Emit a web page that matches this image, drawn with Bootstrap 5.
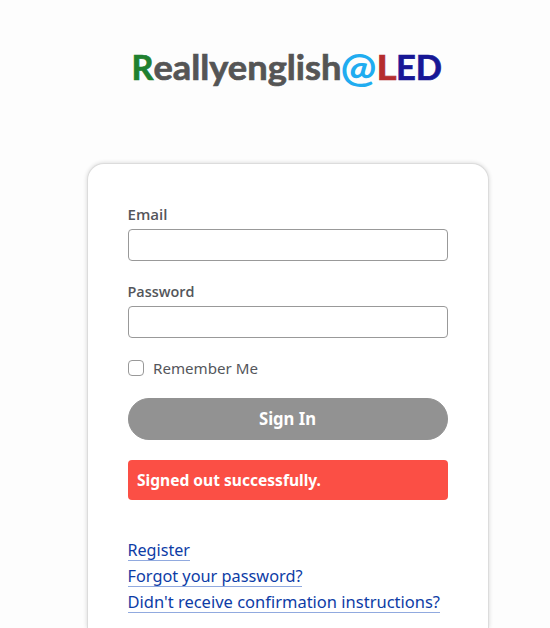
<!DOCTYPE html>
<html lang="en">
<head>
<meta charset="utf-8">
<meta name="viewport" content="width=device-width, initial-scale=1">
<title>Reallyenglish@LED</title>
<link href="https://cdn.jsdelivr.net/npm/bootstrap@5.3.0/dist/css/bootstrap.min.css" rel="stylesheet">
<style>
html, body { height: 628px; overflow: hidden; }
body { background: #fdfdfd; font-family: "Noto Sans", sans-serif; color: #54565b; font-size: 15px; }
.brand-logo { height: 163px; }
.brand-logo svg { display: block; font-family: Lato, sans-serif; font-weight: 700; font-size: 35px; }
.brand-logo .heavy { stroke-width: .7px; }
.login-box { width: 402px; height: 465px; margin-left: 87px; padding: 41px 40px 0; border: 1px solid #dcdcdc; border-bottom: 0; border-radius: 17px 17px 0 0; box-shadow: 0 0 4px rgba(0,0,0,.16); }
.field-label { height: 24px; line-height: 21px; font-family: "Open Sans", sans-serif; font-weight: 600; }
.field-label.second { margin-top: 21px; }
.login-box .form-control { height: 32px; border: 1px solid #999; border-radius: 4px; }
.remember { margin-top: 22px; height: 16px; }
.remember .form-check-input { width: 16px; height: 16px; border: 1px solid #999; border-radius: 4px; }
.remember label { margin-left: 9px; line-height: 16px; }
.btn-sign { --bs-btn-bg: #929292; --bs-btn-border-color: #929292; --bs-btn-hover-bg: #828282; height: 42px; margin-top: 22px; padding: 0; font-size: 17px; font-weight: 700; }
.notice { height: 40px; margin: 20px 0 0; padding: 0 9px; border: 0; border-radius: 4px; background: #fb4f45; color: #fff; font-size: 16px; font-weight: 700; }
.links { margin-top: 41px; }
.links a { height: 20px; margin-bottom: 6px; line-height: 19px; font-size: 16px; color: #0d3ca6; border-bottom: 1px solid #91aadf; white-space: nowrap; }
.fit { display: block; overflow: visible; fill: currentColor; }
</style>
</head>
<body>
<header class="brand-logo">
  <svg width="550" height="163" role="img" aria-label="Reallyenglish@LED">
    <text class="heavy" x="131.5" y="80" fill="#20802f" stroke="#20802f" textLength="22" lengthAdjust="spacingAndGlyphs">R</text>
    <text class="heavy" x="153.5" y="80" fill="#555" stroke="#555" textLength="188" lengthAdjust="spacingAndGlyphs">eallyenglish</text>
    <text x="340.5" y="82" font-size="40" style="font-size:41px" fill="#20acf0" textLength="36" lengthAdjust="spacingAndGlyphs">@</text>
    <text class="heavy" x="376.5" y="80" fill="#b52c2e" stroke="#b52c2e" textLength="20" lengthAdjust="spacingAndGlyphs">L</text>
    <text class="heavy" x="396" y="80" fill="#171795" stroke="#171795" textLength="46" lengthAdjust="spacingAndGlyphs">ED</text>
  </svg>
</header>
<main class="card login-box">
  <form>
    <label class="field-label d-block" for="email"><svg class="fit" width="40" height="21"><text x="-.5" y="15" textLength="40" lengthAdjust="spacingAndGlyphs">Email</text></svg></label>
    <input class="form-control" id="email" type="email">
    <label class="field-label second d-block" for="password"><svg class="fit" width="67" height="21"><text x="-.5" y="15" textLength="67" lengthAdjust="spacingAndGlyphs">Password</text></svg></label>
    <input class="form-control" id="password" type="password">
    <div class="remember d-flex align-items-center">
      <input class="form-check-input m-0" id="remember" type="checkbox">
      <label for="remember"><svg class="fit" width="105" height="16"><text y="14" textLength="105" lengthAdjust="spacingAndGlyphs">Remember Me</text></svg></label>
    </div>
    <button class="btn btn-secondary btn-sign rounded-pill w-100 d-flex align-items-center justify-content-center" type="button"><svg class="fit" width="57" height="24"><text x="-1" y="18" textLength="57" lengthAdjust="spacingAndGlyphs">Sign In</text></svg></button>
  </form>
  <div class="alert notice d-flex align-items-center" role="alert"><svg class="fit" width="184" height="24"><text y="18" textLength="184" lengthAdjust="spacingAndGlyphs">Signed out successfully.</text></svg></div>
  <nav class="links d-flex flex-column align-items-start">
    <a class="text-decoration-none" href="#"><svg class="fit" width="62" height="19"><text x="-.5" y="15" textLength="62.5" lengthAdjust="spacingAndGlyphs">Register</text></svg></a>
    <a class="text-decoration-none" href="#"><svg class="fit" width="174" height="19"><text x="-.5" y="15" textLength="175" lengthAdjust="spacingAndGlyphs">Forgot your password?</text></svg></a>
    <a class="text-decoration-none" href="#"><svg class="fit" width="312" height="19"><text x="-.5" y="15" textLength="312.5" lengthAdjust="spacingAndGlyphs">Didn't receive confirmation instructions?</text></svg></a>
  </nav>
</main>
<script src="https://cdn.jsdelivr.net/npm/bootstrap@5.3.0/dist/js/bootstrap.bundle.min.js"></script>
</body>
</html>
